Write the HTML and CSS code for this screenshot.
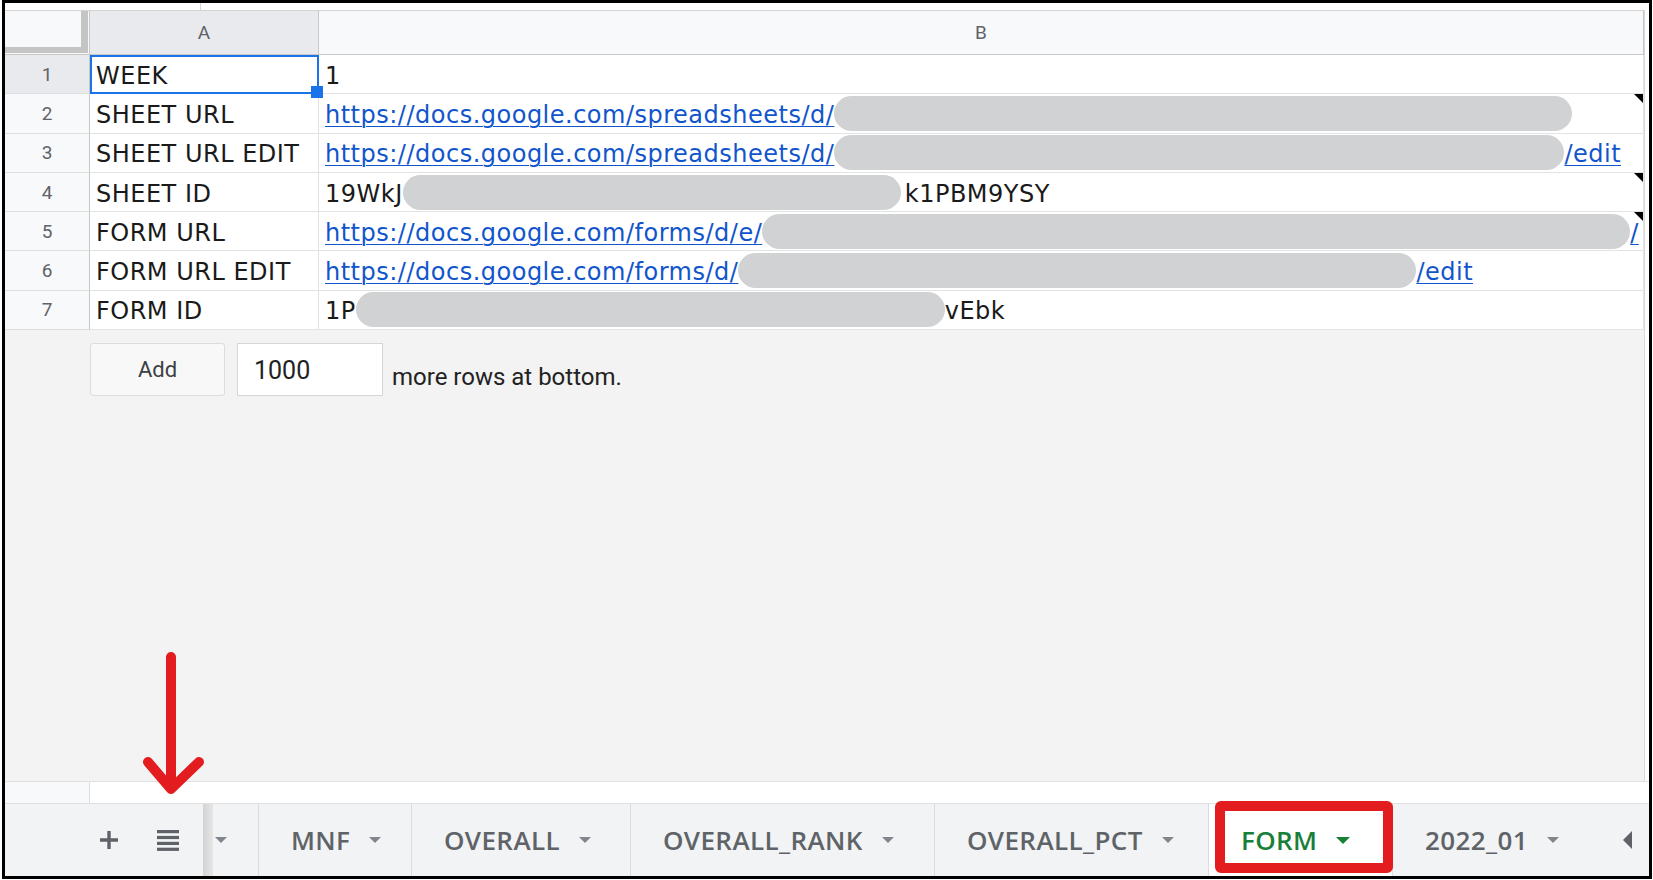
FILE: index.html
```html
<!DOCTYPE html>
<html lang="en">
<head>
<meta charset="utf-8">
<title>Sheet</title>
<link rel="stylesheet" href="styles.css">
</head>
<body>
<div class="frame">
  <div class="topstrip"><span class="tick"></span></div>
  <div class="main">
    <div class="sheet">
      <div class="row hdr">
        <div class="corner"><div class="freeze"></div></div>
        <div class="ch sel">A</div>
        <div class="ch">B</div>
      </div>
      <div class="row">
        <div class="rh sel">1</div>
        <div class="c active">WEEK</div>
        <div class="c"><span>1</span></div>
      </div>
      <div class="row">
        <div class="rh">2</div>
        <div class="c">SHEET URL</div>
        <div class="c note"><span class="lnk">https://docs.google.com/spreadsheets/d/</span><span class="pill p2"></span></div>
      </div>
      <div class="row">
        <div class="rh">3</div>
        <div class="c">SHEET URL EDIT</div>
        <div class="c"><span class="lnk">https://docs.google.com/spreadsheets/d/</span><span class="pill p3"></span><span class="lnk">/edit</span></div>
      </div>
      <div class="row">
        <div class="rh">4</div>
        <div class="c">SHEET ID</div>
        <div class="c note"><span>19WkJ</span><span class="pill p4"></span><span class="gap">k1PBM9YSY</span></div>
      </div>
      <div class="row">
        <div class="rh">5</div>
        <div class="c">FORM URL</div>
        <div class="c note"><span class="lnk">https://docs.google.com/forms/d/e/</span><span class="pill p5"></span><span class="lnk">/</span></div>
      </div>
      <div class="row">
        <div class="rh">6</div>
        <div class="c">FORM URL EDIT</div>
        <div class="c"><span class="lnk">https://docs.google.com/forms/d/</span><span class="pill p6"></span><span class="lnk">/edit</span></div>
      </div>
      <div class="row">
        <div class="rh">7</div>
        <div class="c">FORM ID</div>
        <div class="c"><span>1P</span><span class="pill p7"></span><span>vEbk</span></div>
      </div>
      <div class="addbar">
        <div class="addbtn">Add</div>
        <div class="addinput">1000</div>
        <span class="more">more rows at bottom.</span>
      </div>
    </div>
    <div class="vscroll"></div>
  </div>
  <div class="hscroll"><div class="hs-left"></div></div>
  <div class="tabbar">
    <div class="tb-left">
      <svg class="ic-plus" width="18" height="18" viewBox="0 0 18 18"><path d="M7.3 0h3.4v7.3H18v3.4h-7.3V18H7.3v-7.3H0V7.3h7.3z" fill="#5f6368"/></svg>
      <svg class="ic-list" width="22" height="21" viewBox="0 0 22 21"><rect x="0" y="0" width="22" height="3.2" fill="#5f6368"/><rect x="0" y="5.9" width="22" height="3.2" fill="#5f6368"/><rect x="0" y="11.8" width="22" height="3.2" fill="#5f6368"/><rect x="0" y="17.7" width="22" height="3.2" fill="#5f6368"/></svg>
    </div>
    <div class="shade"></div>
    <div class="tabs">
      <div class="tab t-part"><span class="caret"></span></div>
      <div class="tab t-mnf"><span>MNF</span><span class="caret"></span></div>
      <div class="tab t-overall"><span>OVERALL</span><span class="caret"></span></div>
      <div class="tab t-rank"><span>OVERALL_RANK</span><span class="caret"></span></div>
      <div class="tab t-pct"><span>OVERALL_PCT</span><span class="caret"></span></div>
      <div class="tab t-form"><span>FORM</span><span class="caret"></span></div>
      <div class="tab t-2022"><span>2022_01</span><span class="caret"></span></div>
    </div>
    <div class="navbtns"><span class="nav-left"></span></div>
  </div>
  <div class="redbox"></div>
  <svg class="arrow" width="75" height="160" viewBox="0 0 75 160"><path d="M36 12V143M13 117L36 144L64 117" fill="none" stroke="#e31c1f" stroke-width="10" stroke-linecap="round" stroke-linejoin="round"/></svg>
</div>
</body>
</html>
```

FILE: styles.css
```css
* { box-sizing: border-box; }
html, body { margin: 0; padding: 0; background: #fff; }
body { width: 1653px; height: 880px; overflow: hidden; }

.frame {
  position: relative;
  margin-left: 2px;
  width: 1650px;
  height: 879px;
  border: 3px solid #000;
  display: flex;
  flex-direction: column;
  background: #fff;
}

.topstrip { height: 7px; flex: none; }
.tick { display: block; margin-left: 195px; width: 1px; height: 7px; background: #d6d6d6; }

.main { flex: 1; display: flex; min-height: 0; }
.sheet {
  width: 1640px;
  display: flex;
  flex-direction: column;
  background: #f3f3f3;
  border-right: 1px solid #d9d9d9;
}
.vscroll { flex: 1; background: #fff; }

.row {
  display: grid;
  grid-template-columns: 85px 229px 1fr;
  height: 39.3px;
  flex: none;
  background: #fff;
}
.hdr { height: 45px; border-top: 1px solid #d3d3d3; background: #f8f9fa; }

.corner { background: #f8f9fa; border-right: 1px solid #c7c7c7; border-bottom: 1px solid #c7c7c7; }
.freeze {
  width: 83px;
  height: 42px;
  border-right: 7px solid #c4c4c4;
  border-bottom: 6px solid #c4c4c4;
}

.ch {
  display: flex;
  align-items: center;
  justify-content: center;
  border-right: 1px solid #c7c7c7;
  border-bottom: 1px solid #c7c7c7;
  font: 19px Roboto, "Liberation Sans", sans-serif;
  color: #5f6368;
  background: #f8f9fa;
}
.ch.sel { background: #e8eaed; }

.rh {
  display: flex;
  align-items: center;
  justify-content: center;
  background: #f8f9fa;
  border-right: 1px solid #c7c7c7;
  border-bottom: 1px solid #dedede;
  font: 19px Roboto, "Liberation Sans", sans-serif;
  color: #5f6368;
}
.rh.sel { background: #e8eaed; }

.c {
  position: relative;
  display: flex;
  align-items: center;
  padding: 3px 0 0 6px;
  border-right: 1px solid #e2e3e3;
  border-bottom: 1px solid #e2e3e3;
  font: 24px "DejaVu Sans", sans-serif;
  letter-spacing: 0.5px;
  color: #1a1a1a;
  white-space: nowrap;
  overflow: hidden;
}
.c > * { flex: none; }
.c > .pill { margin-top: -3px; }
.gap { margin-left: 4px; }

.c.active { overflow: visible; z-index: 2; }
.c.active::before {
  content: "";
  position: absolute;
  left: 0; top: 0; right: -1px; bottom: -1px;
  border: 2px solid #1a73e8;
}
.c.active::after {
  content: "";
  position: absolute;
  right: -5px;
  bottom: -5px;
  width: 12px;
  height: 12px;
  background: #1a73e8;
}

.c.note::after {
  content: "";
  position: absolute;
  top: 0;
  right: 0;
  border-left: 9px solid transparent;
  border-top: 9px solid #000;
}

.lnk {
  color: #1155cc;
  text-decoration: underline;
  text-decoration-thickness: 1px;
  text-underline-offset: 3px;
}

.pill { display: block; height: 35px; border-radius: 18px; background: #d1d2d4; }
.p2 { width: 738px; }
.p3 { width: 730px; }
.p4 { width: 498px; }
.p5 { width: 868px; }
.p6 { width: 678px; }
.p7 { width: 589px; }

.addbar {
  display: flex;
  align-items: center;
  height: 53px;
  margin: 13px 0 0 85px;
  flex: none;
}
.addbtn {
  width: 135px;
  height: 53px;
  display: flex;
  align-items: center;
  justify-content: center;
  border: 1px solid #dadce0;
  border-radius: 3px;
  background: #f8f8f8;
  font: 22px Roboto, "Liberation Sans", sans-serif;
  color: #3c4043;
}
.addinput {
  margin-left: 12px;
  width: 146px;
  height: 53px;
  display: flex;
  align-items: center;
  padding: 2px 0 0 16px;
  background: #fff;
  border: 1px solid #d6d6d6;
  font: 25px Roboto, "Liberation Sans", sans-serif;
  color: #222;
}
.more {
  margin-left: 9px;
  align-self: flex-end;
  padding-bottom: 7px;
  font: 24px Roboto, "Liberation Sans", sans-serif;
  line-height: 1;
  color: #222;
}

.hscroll {
  height: 22px;
  flex: none;
  display: flex;
  border-top: 1px solid #e0e0e0;
  background: #fff;
}
.hs-left { width: 85px; background: #f8f9fa; border-right: 1px solid #e0e0e0; }

.tabbar {
  height: 73px;
  flex: none;
  display: flex;
  background: #f1f3f4;
  border-top: 1px solid #e0e0e0;
}
.tb-left {
  width: 198px;
  flex: none;
  display: flex;
  align-items: center;
  padding-left: 95px;
}
.ic-list { margin-left: 39px; }
.shade { width: 10px; flex: none; background: linear-gradient(to right, #d3d3d3, #e6e6e6); }

.tabs { flex: 1; display: flex; overflow: hidden; }
.tab {
  flex: none;
  display: flex;
  align-items: center;
  padding-left: 32px;
  border-left: 1px solid #dadce0;
  font: 600 26px "Open Sans", Roboto, sans-serif;
  letter-spacing: 0.4px;
  color: #5f6368;
  white-space: nowrap;
}
.caret {
  margin-left: 19px;
  width: 0;
  height: 0;
  border-left: 6px solid transparent;
  border-right: 6px solid transparent;
  border-top: 6px solid #80868b;
}
.t-part { width: 45px; padding-left: 2px; border-left: none; }
.t-part .caret { margin-left: 0; }
.t-mnf { width: 153px; }
.t-overall { width: 219px; }
.t-rank { width: 304px; }
.t-pct { width: 274px; }
.t-form { width: 184px; background: #fff; color: #188038; }
.t-form .caret { border-left-width: 7px; border-right-width: 7px; border-top: 7px solid #188038; }
.t-2022 { width: 230px; }

.navbtns { width: 39px; flex: none; display: flex; align-items: center; padding-left: 13px; }
.nav-left {
  width: 0;
  height: 0;
  border-top: 9.5px solid transparent;
  border-bottom: 9.5px solid transparent;
  border-right: 9px solid #5f6368;
}

.redbox {
  position: absolute;
  left: 1210px;
  top: 798px;
  width: 178px;
  height: 72px;
  border: 10px solid #e31c1f;
  border-radius: 6px;
}
.arrow { position: absolute; left: 130px; top: 642px; }
```
